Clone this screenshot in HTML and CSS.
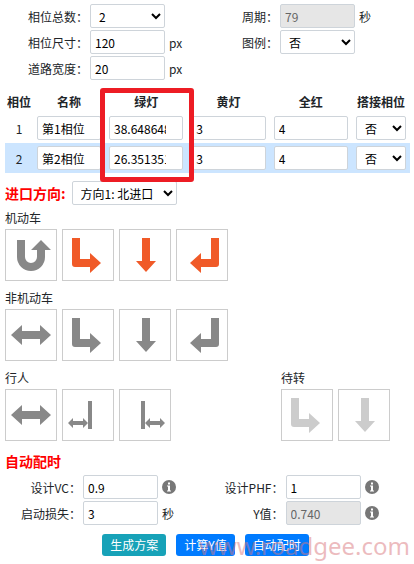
FILE: index.html
```
<!DOCTYPE html>
<html lang="zh-CN">
<head>
    <meta charset="UTF-8">
    <meta name="viewport" content="width=device-width, initial-scale=1.0">
    <title>信号配时</title>
    <link rel="stylesheet" href="styles.css">
</head>
<body>
    <!-- 箭头图标 -->
    <svg class="icon-defs" aria-hidden="true">
        <symbol id="uturn" viewBox="0 0 50 50">
            <path d="M11 10V27a14 14 0 0 0 28 0V20h6L35 10 25 20h6v7a6 6 0 0 1-12 0V10z"/>
        </symbol>
        <symbol id="left" viewBox="0 0 50 50">
            <path d="M9 8h8v21h10v-6l11 10-11 10v-6H12q-3 0-3-3z"/>
        </symbol>
        <symbol id="straight" viewBox="0 0 50 50">
            <path d="M22 8h8v23h6L26 42 16 31h6z"/>
        </symbol>
        <symbol id="right" viewBox="0 0 50 50">
            <path d="M42 8h-8v21H24v-6L13 33l11 10v-6h15q3 0 3-3z"/>
        </symbol>
        <symbol id="both" viewBox="0 0 50 50">
            <path d="M5 25l11-10v6h18v-6l11 10-11 10v-6H16v6z"/>
        </symbol>
        <symbol id="half-left" viewBox="0 0 50 50">
            <path d="M25 11h4v28h-4zM5 33l5-5v3h10v-3l5 5-5 5v-3H10v3z"/>
        </symbol>
        <symbol id="half-right" viewBox="0 0 50 50">
            <path d="M21 11h4v28h-4zM25 33l5-5v3h10v-3l5 5-5 5v-3H30v3z"/>
        </symbol>
        <symbol id="info" viewBox="0 0 14 14">
            <circle cx="7" cy="7" r="7"/>
            <path fill="#fff" d="M6 2.500h2v2H6zM5 5.500h3v5h1v1H5v-1h1v-4H5z"/>
        </symbol>
    </svg>

    <div class="container">
        <!-- 基本参数 -->
        <div class="fields">
            <div class="field">
                <label for="phaseCount">相位总数：</label>
                <select id="phaseCount"><option>2</option></select>
            </div>
            <div class="field">
                <label for="cycle">周期：</label>
                <input type="text" id="cycle" value="79" disabled>
                <span class="unit">秒</span>
            </div>
            <div class="field">
                <label for="phaseSize">相位尺寸：</label>
                <input type="text" id="phaseSize" value="120">
                <span class="unit">px</span>
            </div>
            <div class="field">
                <label for="legend">图例：</label>
                <select id="legend"><option>否</option></select>
            </div>
            <div class="field">
                <label for="roadWidth">道路宽度：</label>
                <input type="text" id="roadWidth" value="20">
                <span class="unit">px</span>
            </div>
        </div>

        <!-- 相位表 -->
        <div class="phases">
            <table>
                <thead>
                    <tr>
                        <th class="col-no">相位</th>
                        <th class="col-name">名称</th>
                        <th class="col-time">绿灯</th>
                        <th class="col-time">黄灯</th>
                        <th class="col-time">全红</th>
                        <th class="col-lap">搭接相位</th>
                    </tr>
                </thead>
                <tbody>
                    <tr>
                        <td>1</td>
                        <td><input type="text" aria-label="名称" value="第1相位"></td>
                        <td><input type="text" class="green" aria-label="绿灯" value="38.648648"></td>
                        <td><input type="text" aria-label="黄灯" value="3"></td>
                        <td><input type="text" aria-label="全红" value="4"></td>
                        <td><select aria-label="搭接相位"><option>否</option></select></td>
                    </tr>
                    <tr class="active">
                        <td>2</td>
                        <td><input type="text" aria-label="名称" value="第2相位"></td>
                        <td><input type="text" class="green" aria-label="绿灯" value="26.351351"></td>
                        <td><input type="text" aria-label="黄灯" value="3"></td>
                        <td><input type="text" aria-label="全红" value="4"></td>
                        <td><select aria-label="搭接相位"><option>否</option></select></td>
                    </tr>
                </tbody>
            </table>
            <div class="mark"></div>
        </div>

        <!-- 进口方向 -->
        <div class="direction">
            <label class="title" for="entrance">进口方向:</label>
            <select id="entrance"><option>方向1: 北进口</option></select>
        </div>

        <div class="group">
            <h3>机动车</h3>
            <div class="tiles">
                <button class="tile" aria-label="掉头"><svg><use href="#uturn"/></svg></button>
                <button class="tile on" aria-label="左转"><svg><use href="#left"/></svg></button>
                <button class="tile on" aria-label="直行"><svg><use href="#straight"/></svg></button>
                <button class="tile on" aria-label="右转"><svg><use href="#right"/></svg></button>
            </div>
        </div>

        <div class="group">
            <h3>非机动车</h3>
            <div class="tiles">
                <button class="tile" aria-label="过街"><svg><use href="#both"/></svg></button>
                <button class="tile" aria-label="左转"><svg><use href="#left"/></svg></button>
                <button class="tile" aria-label="直行"><svg><use href="#straight"/></svg></button>
                <button class="tile" aria-label="右转"><svg><use href="#right"/></svg></button>
            </div>
        </div>

        <div class="group-row">
            <div class="group">
                <h3>行人</h3>
                <div class="tiles">
                    <button class="tile" aria-label="过街"><svg><use href="#both"/></svg></button>
                    <button class="tile" aria-label="左半过街"><svg><use href="#half-left"/></svg></button>
                    <button class="tile" aria-label="右半过街"><svg><use href="#half-right"/></svg></button>
                </div>
            </div>
            <div class="group">
                <h3>待转</h3>
                <div class="tiles">
                    <button class="tile off" aria-label="左转待转"><svg><use href="#left"/></svg></button>
                    <button class="tile off" aria-label="直行待行"><svg><use href="#straight"/></svg></button>
                </div>
            </div>
        </div>

        <!-- 自动配时 -->
        <h2 class="title">自动配时</h2>
        <div class="fields timing">
            <div class="field">
                <label for="vc">设计VC：</label>
                <input type="text" id="vc" value="0.9">
                <svg class="info"><use href="#info"/></svg>
            </div>
            <div class="field">
                <label for="phf">设计PHF：</label>
                <input type="text" id="phf" value="1">
                <svg class="info"><use href="#info"/></svg>
            </div>
            <div class="field">
                <label for="lost">启动损失：</label>
                <input type="text" id="lost" value="3">
                <span class="unit">秒</span>
            </div>
            <div class="field">
                <label for="yValue">Y值：</label>
                <input type="text" id="yValue" value="0.740" disabled>
                <svg class="info"><use href="#info"/></svg>
            </div>
        </div>

        <div class="actions">
            <button class="btn btn-info">生成方案</button>
            <button class="btn">计算Y值</button>
            <button class="btn">自动配时</button>
            <div class="watermark">www.roadgee.com</div>
        </div>
    </div>
</body>
</html>
```
FILE: styles.css
```
* {
    box-sizing: border-box;
    margin: 0;
    padding: 0;
}

body {
    font-family: "Noto Sans CJK SC", sans-serif;
    font-size: 12px;
    color: #212529;
    background: #fff;
}

.icon-defs {
    display: none;
}

.container {
    padding: 4px 4px 8px 5px;
}

input,
select {
    width: 75px;
    height: 24px;
    border: 1px solid #ced4da;
    border-radius: 2px;
    background: #fff;
    color: #000;
    font-family: inherit;
    font-size: 12px;
    padding: 0 4px;
}

input:disabled {
    background: #e6e6e6;
    color: #666;
}

/* 参数表单 */
.fields {
    display: grid;
    grid-template-columns: 190px 1fr;
    gap: 2px 0;
}

.field {
    display: flex;
    align-items: center;
}

.field label {
    width: 83px;
    margin-right: 2px;
    text-align: right;
}

.unit {
    margin-left: 4px;
}

.timing {
    grid-template-columns: 1fr 1fr;
}

.timing label {
    width: 76px;
}

.info {
    width: 14px;
    height: 14px;
    margin-left: 4px;
    fill: #777;
}

/* 相位表 */
.phases {
    position: relative;
    margin-top: 9px;
}

table {
    width: 100%;
    table-layout: fixed;
    border-collapse: collapse;
}

th {
    height: 24px;
    white-space: nowrap;
}

td {
    height: 30px;
    padding: 0 4px;
    text-align: center;
}

td input,
td select {
    display: block;
    width: 100%;
}

td .green {
    padding-right: 16px;
}

.col-no {
    width: 28px;
}

.col-name {
    width: 72px;
}

.col-lap {
    width: 58px;
}

.active {
    background: #cce5ff;
}

/* 绿灯列标记框 */
.mark {
    position: absolute;
    top: -1px;
    left: 95px;
    width: 94px;
    height: 94px;
    border: 5px solid #ed1c24;
    border-radius: 3px;
}

/* 进口方向 */
.direction {
    display: flex;
    align-items: center;
    gap: 6px;
    margin: 8px 0 2px;
}

.direction select {
    width: 105px;
}

.title {
    color: #f00;
    font-size: 14px;
    font-weight: bold;
    line-height: 28px;
}

.direction .title {
    line-height: 24px;
}

.group {
    margin-bottom: 6px;
}

.group h3 {
    font-size: 12px;
    font-weight: normal;
    line-height: 22px;
}

.group-row {
    display: flex;
    justify-content: space-between;
    padding-right: 20px;
}

.tiles {
    display: flex;
    gap: 5px;
}

.tile {
    width: 52px;
    height: 52px;
    border: 1px solid #ccc;
    background: #fff;
    fill: #888;
    cursor: pointer;
}

.tile svg {
    display: block;
    width: 50px;
    height: 50px;
}

.tile.on {
    fill: #f05a28;
}

.tile.off {
    fill: #ccc;
}

/* 操作按钮 */
.actions {
    position: relative;
    display: flex;
    justify-content: center;
    gap: 10px;
    margin-top: 9px;
    padding-right: 4px;
}

.btn {
    height: 22px;
    padding: 0 8px;
    border: none;
    border-radius: 3px;
    background: #007bff;
    color: #fff;
    font-family: inherit;
    font-size: 12px;
    line-height: 22px;
    cursor: pointer;
}

.btn-info {
    background: #17a2b8;
}

.watermark {
    position: absolute;
    right: 0;
    bottom: -4px;
    color: rgba(217, 120, 125, 0.5);
    font-family: "Noto Sans", sans-serif;
    font-size: 24px;
    line-height: 28px;
    pointer-events: none;
}
```
